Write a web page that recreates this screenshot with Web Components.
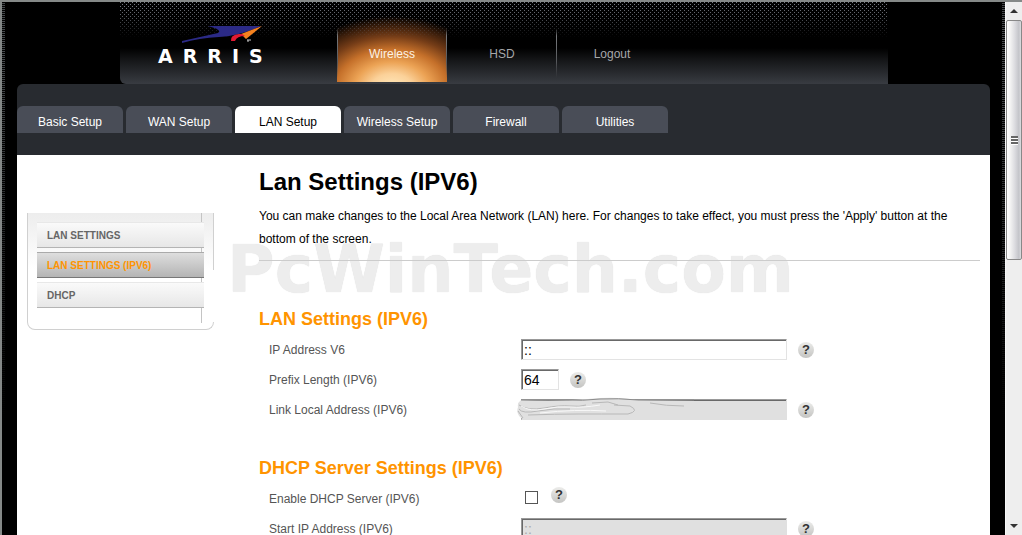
<!DOCTYPE html>
<html lang="en">
<head>
<meta charset="utf-8">
<title>Lan Settings (IPV6)</title>
<style>
  html, body { margin: 0; height: 100%; background: #000; overflow: hidden; }
  body { font: 12px/16px "Liberation Sans", Arial, sans-serif; color: #000; }
</style>
</head>
<body>
<router-window>
  <site-header>
    <brand-logo slot="brand"></brand-logo>
    <header-link active>Wireless</header-link>
    <header-link>HSD</header-link>
    <header-link last>Logout</header-link>
  </site-header>
  <tab-bar>
    <tab-link>Basic Setup</tab-link>
    <tab-link>WAN Setup</tab-link>
    <tab-link active>LAN Setup</tab-link>
    <tab-link>Wireless Setup</tab-link>
    <tab-link>Firewall</tab-link>
    <tab-link>Utilities</tab-link>
  </tab-bar>
  <page-body>
    <side-menu slot="side">
      <side-link>LAN SETTINGS</side-link>
      <side-link active>LAN SETTINGS (IPV6)</side-link>
      <side-link>DHCP</side-link>
    </side-menu>
    <page-intro heading="Lan Settings (IPV6)">You can make changes to the Local Area Network (LAN) here. For changes to take effect, you must press the 'Apply' button at the bottom of the screen.</page-intro>
    <settings-group heading="LAN Settings (IPV6)">
      <field-row label="IP Address V6" value="::"></field-row>
      <field-row label="Prefix Length (IPV6)" value="64" size="short"></field-row>
      <field-row label="Link Local Address (IPV6)" value="" disabled smudged></field-row>
    </settings-group>
    <settings-group heading="DHCP Server Settings (IPV6)">
      <field-row label="Enable DHCP Server (IPV6)" type="checkbox"></field-row>
      <field-row label="Start IP Address (IPV6)" value="::" disabled></field-row>
    </settings-group>
  </page-body>
</router-window>

<script>
const define = (name, render) => customElements.define(name, class extends HTMLElement {
  connectedCallback() {
    if (this.shadowRoot) return;
    this.attachShadow({ mode: 'open' }).innerHTML = render(this);
  }
});

define('scroll-rail', () => `
  <style>
    :host { display: flex; flex-direction: column; background: #eee; border-left: 1px solid #f8f8f8; box-sizing: border-box; }
    .arrow { height: 18px; display: flex; align-items: center; justify-content: center; }
    .thumb { height: 240px; box-sizing: border-box; border: 1px solid #888; border-radius: 2px;
      background: linear-gradient(90deg, #fff, #f2f2f2 25%, #dcdce0 55%, #c3c4c9 85%, #dddde0);
      display: flex; align-items: center; justify-content: center; }
    .space { flex: 1; }
    svg { display: block; }
  </style>
  <div class="arrow"><svg width="8" height="4"><path d="M0 4 4 0 8 4z" fill="#333"/></svg></div>
  <div class="thumb"><svg width="7" height="9"><path d="M0 0h7v2H0zM0 3h7v2H0zM0 6h7v2H0z" fill="#666"/><path d="M0 2h7v1H0zM0 5h7v1H0zM0 8h7v1H0z" fill="#fff"/></svg></div>
  <div class="space"></div>
  <div class="arrow"><svg width="8" height="4"><path d="M0 0 4 4 8 0z" fill="#333"/></svg></div>`);

define('router-window', () => `
  <style>
    :host { display: grid; grid-template-columns: minmax(0, 1fr) 17px; height: 100vh; box-sizing: border-box;
      border-top: 2px solid #858988; border-left: 2px solid #858988; overflow: hidden; }
    .view { overflow: hidden; padding: 0 15px; display: flex; flex-direction: column;
      background:
        repeating-linear-gradient(#000 0 1px, #46494c 1px 2px) left / 3px 100% no-repeat,
        repeating-linear-gradient(#000 0 1px, #46494c 1px 2px) right / 3px 100% no-repeat, #000;
      position: relative; isolation: isolate; }
    .view::before { content: ""; position: absolute; inset: 0; z-index: -1; background: linear-gradient(transparent 50px, #000 420px); }
  </style>
  <div class="view"><slot></slot></div>
  <scroll-rail aria-hidden="true"></scroll-rail>`);

define('site-header', () => `
  <style>
    :host { display: block; flex: none; height: 82px; padding: 0 102px 0 103px; }
    .band { height: 100%; display: flex; border-bottom-left-radius: 6px; position: relative; isolation: isolate;
      background: linear-gradient(#000 46px, #151618 58px, #393c42); }
    .dots { position: absolute; inset: 0 0 auto 0; width: 100%; height: 36px; z-index: 1; pointer-events: none; }
    .brand { flex: 0 0 217px; z-index: 2; }
    nav { display: flex; z-index: 0; }
  </style>
  <div class="band">
    <svg class="dots" aria-hidden="true">
      <defs>
        <pattern id="p" width="4" height="4" patternUnits="userSpaceOnUse"><path d="M0 0h1v1H0zM2 2h1v1H2z" fill="#7c7f88"/></pattern>
        <linearGradient id="g" x2="0" y2="1"><stop offset="0" stop-color="#fff"/><stop offset=".4" stop-color="#bbb"/><stop offset="1" stop-color="#000"/></linearGradient>
        <mask id="m"><rect width="100%" height="36" fill="url(#g)"/></mask>
      </defs>
      <rect width="100%" height="36" fill="url(#p)" mask="url(#m)" shape-rendering="crispEdges"/>
    </svg>
    <div class="brand"><slot name="brand"></slot></div>
    <nav><slot></slot></nav>
  </div>`);

define('brand-logo', () => `
  <style>
    :host { display: block; padding: 22px 0 0 37px; }
    svg { display: block; }
    text { font: 700 19px "DejaVu Sans", Verdana, sans-serif; letter-spacing: 10px; fill: #fff; }
  </style>
  <svg width="124" height="44" role="img" aria-label="ARRIS">
    <path d="M25 17 61 9Q66 6 51 2H104Q82 12 62 13 42 14 25 19z" fill="#2b2a86"/>
    <path d="M105 2 89 15 86 12Q80 11 77 16 76 12 84 10z" fill="#f5821f"/>
    <path d="M82 10Q73 11 74 17L78 17Q80 12 88 12L85 10z" fill="#e01a33"/>
    <path d="M90 16h4M91 16v2" stroke="#ccc" fill="none"/>
    <text x="1" y="39">ARRIS</text>
  </svg>`);

define('header-link', el => `
  <style>
    :host { display: block; width: 110px; }
    a { display: block; box-sizing: border-box; height: 80px; padding-top: 44px; text-align: center; text-decoration: none;
      font-size: 12px; line-height: 16px; color: ${el.hasAttribute('active') ? '#fdf3e6' : '#a6a7a9'};
      background:
        linear-gradient(transparent 26px, #77797c 34px, #55575b 60px, transparent 76px) right / ${el.hasAttribute('last') ? 0 : 1}px 100% no-repeat
        ${el.hasAttribute('active') ? ', linear-gradient(transparent 26px, #77797c 34px, #55575b 60px, transparent 76px) left / 1px 100% no-repeat, radial-gradient(ellipse 104px 72px at 50% 86px, #ffe9bd 0, #fbd199 20%, #eca355 36%, #c5702a 54%, #743c17 72%, #351b0a 88%, transparent)' : ''}; }
  </style>
  <a href="#"><slot></slot></a>`);

define('tab-bar', () => `
  <style>
    :host { display: block; flex: none; background: #282b30; border-radius: 6px 6px 0 0; padding: 22px 0; }
    nav { display: flex; gap: 3px; }
  </style>
  <nav><slot></slot></nav>`);

define('tab-link', el => `
  <style>
    :host { display: block; width: 106px; }
    a { display: block; height: 22px; padding-top: 5px; line-height: 22px; text-align: center; text-decoration: none; font-size: 12px;
      border-radius: 6px 6px 0 0;
      ${el.hasAttribute('active') ? 'background: #fff; color: #000;' : 'background: #494d57; color: #fff;'} }
  </style>
  <a href="#"><slot></slot></a>`);

define('page-body', () => `
  <style>
    :host { display: grid; grid-template-columns: 187px minmax(0, 1fr); column-gap: 45px; align-items: start; background: #fff; flex: 1 0 auto; padding: 0 10px; }
    aside { padding-top: 58px; }
    main { position: relative; isolation: isolate; }
    .mark { position: absolute; left: -32px; top: 91px; z-index: -1; font: 700 65px/48px "DejaVu Sans", Verdana, sans-serif; color: #ededed;
      text-shadow: 0 0 1px #ddd; white-space: nowrap; pointer-events: none; }
  </style>
  <aside><slot name="side"></slot></aside>
  <main><slot></slot><div class="mark">PcWinTech.com</div></main>`);

define('side-menu', () => `
  <style>
    :host { display: block; }
    nav { display: flex; flex-direction: column; gap: 4px; height: 117px; box-sizing: border-box; padding: 9px 9px 0 9px; position: relative;
      border: 1px solid #d0d0d0; border-top: 0; border-radius: 0 0 8px 8px;
      background: linear-gradient(#c4c4c4, #c4c4c4) 173px 0 / 1px 110px no-repeat, linear-gradient(#ededed, #fff 56px); }
    nav::after { content: ""; position: absolute; right: -1px; top: 57px; width: 1px; height: 52px; background: #fff; }
  </style>
  <nav><slot></slot></nav>`);

define('side-link', el => `
  <style>
    :host { display: block; }
    a { display: block; height: 24px; line-height: 26px; padding-left: 10px; font-size: 10px; font-weight: 700; text-decoration: none;
      ${el.hasAttribute('active')
        ? 'color: #ff9400; background: linear-gradient(#dedede, #b4b4b4); border-top: 1px solid #aaa; border-bottom: 1px solid #777;'
        : 'color: #666; background: linear-gradient(#fafafa, #e7e7e7); border-top: 1px solid #e8e8e8; border-bottom: 1px solid #b4b4b4;'} }
  </style>
  <a href="#"><slot></slot></a>`);

define('page-intro', el => `
  <style>
    :host { display: block; border-bottom: 1px solid #ccc; padding: 13px 0 9px; }
    h1 { margin: 0 0 9px; font-size: 24px; line-height: 28px; }
    p { margin: 0; line-height: 23px; }
  </style>
  <h1>${el.getAttribute('heading')}</h1>
  <p><slot></slot></p>`);

define('settings-group', el => `
  <style>
    :host { display: block; padding-top: 44px; }
    :host(:not(:first-of-type)) { padding-top: 29px; }
    h2 { margin: 0; padding-bottom: 2px; font-size: 18px; line-height: 28px; color: #ff9400; }
  </style>
  <h2>${el.getAttribute('heading')}</h2>
  <slot></slot>`);

define('help-button', () => `
  <style>
    :host { display: block; }
    button { display: block; width: 16px; height: 16px; padding: 0; border: 0; border-radius: 50%;
      background: linear-gradient(#ececea, #c4c4c2); color: #333; font: 700 13px/16px "Liberation Sans", Arial, sans-serif; text-align: center; }
  </style>
  <button type="button">?</button>`);

define('field-row', el => {
  const check = el.getAttribute('type') === 'checkbox';
  const off = el.hasAttribute('disabled') ? 'disabled' : '';
  const smudge = el.hasAttribute('smudged') ? `
    <svg class="smudge" width="180" height="24" aria-hidden="true">
      <path d="M5 3Q40 5 72 2 100-1 120 3L178 4V23H8Q-1 18 2 10 1 6 5 3z" fill="#e0e0e0"/>
      <path d="M5 3H50Q66 4 84 2 102 1 122 3H178" stroke="#8a8a8a" fill="none"/>
      <path d="M3 8Q12 14 28 11T54 9 70 8M76 6 92 5 102 8M3 12Q6 17 22 14T54 12M12 18Q40 17 62 17T112 17Q124 14 114 9L98 8M2 14 7 21M134 6Q150 9 168 9" stroke="#b8b8b8" fill="none"/>
      <path d="M5 9Q14 15 28 12T54 10 84 8M24 16Q60 12 90 14" stroke="#f8f8f8" fill="none"/>
    </svg>` : '';
  return `
  <style>
    :host { display: grid; grid-template-columns: 252px minmax(0, 1fr); height: 30px; align-items: center; padding-left: 10px; color: #555; }
    .control { display: flex; align-items: center; gap: 11px; position: relative; margin-top: -1px; }
    .control.check { align-items: flex-start; margin-top: -7px; }
    input { margin: 0; box-sizing: border-box; }
    input[type=text] { width: ${el.getAttribute('size') === 'short' ? 38 : 266}px; height: 21px; padding: 0 2px;
      border: 1px solid #999; border-right-color: #e3e3e3; border-bottom-color: #e3e3e3; box-shadow: inset 1px 1px 0 #696969;
      background: #fff; color: #000; font: 14px/17px "Liberation Sans", Arial, sans-serif; }
    input:disabled { background: #e0e0e0; color: #aaa; border-right-color: #e0e0e0; border-bottom-color: #e0e0e0; }
    input[type=checkbox] { appearance: none; width: 13px; height: 13px; margin: 4px 2px 0 4px; border: 1px solid #555; background: #fff; }
    .smudge { position: absolute; left: -5px; top: -2px; }
  </style>
  <label for="f">${el.getAttribute('label')}</label>
  <div class="control${check ? ' check' : ''}">${check
    ? '<input id="f" type="checkbox">'
    : `<input id="f" type="text" value="${el.getAttribute('value')}" ${off}>`}${smudge}<help-button></help-button></div>`;
});
</script>
</body>
</html>
